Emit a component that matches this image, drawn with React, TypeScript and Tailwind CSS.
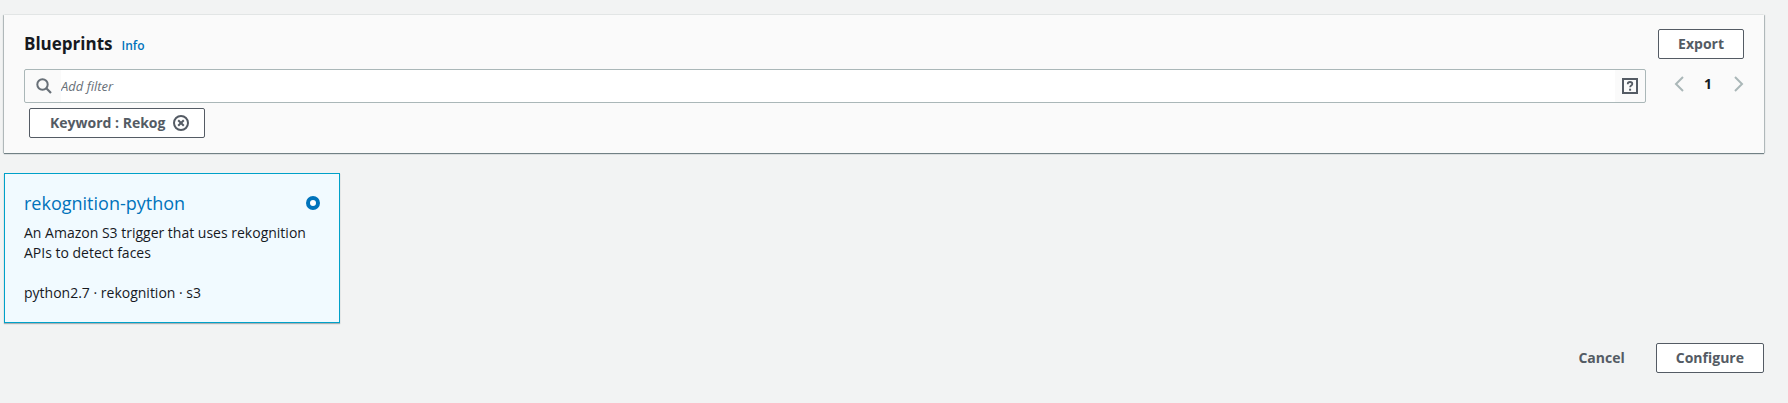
import { useState } from "react";

const outlined =
  "flex h-[30px] items-center justify-center rounded-xs border border-[#545b64] bg-white text-sm font-bold text-[#545b64]";

function SearchIcon() {
  return (
    <svg viewBox="0 0 16 16" className="size-4 shrink-0" fill="none" stroke="#687078" strokeWidth="2" aria-hidden="true">
      <circle cx="6.5" cy="6.5" r="5.2" />
      <path d="M10.3 10.3l4.7 4.7" strokeWidth="2.2" />
    </svg>
  );
}

function HelpIcon() {
  return (
    <svg viewBox="0 0 16 16" className="size-4" fill="none" stroke="#545b64" aria-hidden="true">
      <path d="M1 1h14v14H1z" strokeWidth="2" />
      <path d="M5.8 6.2V5.8c0-1.2.9-1.8 2.2-1.8s2.3.7 2.3 1.9c0 1.7-2.2 1.6-2.2 3.3" strokeWidth="1.8" />
      <path d="M7.1 11.7H9.1" strokeWidth="2" />
    </svg>
  );
}

function RemoveIcon() {
  return (
    <svg viewBox="0 0 16 16" className="size-4" fill="none" stroke="#545b64" strokeWidth="2" aria-hidden="true">
      <circle cx="8" cy="8" r="7" />
      <path d="M5.2 5.2l5.6 5.6M10.8 5.2l-5.6 5.6" />
    </svg>
  );
}

function Chevron({ d }: { d: string }) {
  return (
    <svg viewBox="0 0 16 16" className="size-4" fill="none" stroke="#aab7b8" strokeWidth="2" aria-hidden="true">
      <path d={d} />
    </svg>
  );
}

export default function App() {
  const [filter, setFilter] = useState("");
  return (
    <main className="min-h-screen bg-[#f2f3f3] pt-[15px] pr-6 pb-7 pl-1 font-['Open_Sans','Noto_Sans',sans-serif] text-sm leading-5 text-[#16191f]">
      <section className="bg-[#fafafa] px-5 pt-[14px] pb-[15px] shadow-[0_1px_1px_0_rgba(0,28,36,0.5),1px_0_1px_0_rgba(0,28,36,0.2),-1px_0_1px_0_rgba(0,28,36,0.2)]">
        <header className="flex items-center justify-between">
          <div className="flex items-baseline gap-[9px]">
            <h1 className="text-[17px] leading-6 font-bold">Blueprints</h1>
            <a href="#info" className="text-xs font-semibold text-[#0073bb]">Info</a>
          </div>
          <button type="button" className={`${outlined} px-[19px]`}>Export</button>
        </header>

        <div className="mt-[10px] flex items-start gap-[26px]">
          <div className="flex h-[34px] min-w-0 flex-1 items-center rounded-xs border border-[#aab7b8] pl-[11px]">
            <SearchIcon />
            <input
              type="text"
              aria-label="Add filter"
              placeholder="Add filter"
              value={filter}
              onChange={(e) => setFilter(e.target.value)}
              className="ml-[9px] h-full min-w-0 flex-1 bg-white text-[13px] outline-none placeholder:text-[#687078] placeholder:italic"
            />
            <button type="button" aria-label="Filter help" className="px-[7px]">
              <HelpIcon />
            </button>
          </div>
          <nav aria-label="Pages" className="flex h-[30px] w-[72px] items-center justify-between">
            <button type="button" aria-label="Previous page">
              <Chevron d="M11 1L4 8l7 7" />
            </button>
            <button type="button" className="font-bold">1</button>
            <button type="button" aria-label="Next page">
              <Chevron d="M7 1l7 7-7 7" />
            </button>
          </nav>
        </div>

        <div className="mt-[5px] ml-[5px] flex">
          <div className={`${outlined} gap-2 pr-[15px] pl-5`}>
            <span>Keyword : Rekog</span>
            <button type="button" aria-label="Remove filter Keyword : Rekog">
              <RemoveIcon />
            </button>
          </div>
        </div>
      </section>

      <label className="mt-5 block w-[336px] border border-[#00a1c9] bg-[#f1faff] px-[19px] pt-[17px] pb-[19px] shadow-[0_1px_1px_0_rgba(0,28,36,0.3)]">
        <span className="flex items-center justify-between">
          <span className="text-lg leading-6 text-[#0073bb]">rekognition-python</span>
          <input
            type="radio"
            name="blueprint"
            defaultChecked
            className="size-[14px] appearance-none rounded-full border-4 border-[#0073bb] bg-white"
          />
        </span>
        <span className="mt-2 block text-sm">An Amazon S3 trigger that uses rekognition APIs to detect faces</span>
        <span className="mt-5 block text-sm">python2.7 · rekognition · s3</span>
      </label>

      <footer className="mt-5 flex justify-end gap-[11px]">
        <button type="button" className="h-[30px] px-5 font-bold text-[#545b64]">Cancel</button>
        <button type="button" className={`${outlined} px-[19px]`}>Configure</button>
      </footer>
    </main>
  );
}
